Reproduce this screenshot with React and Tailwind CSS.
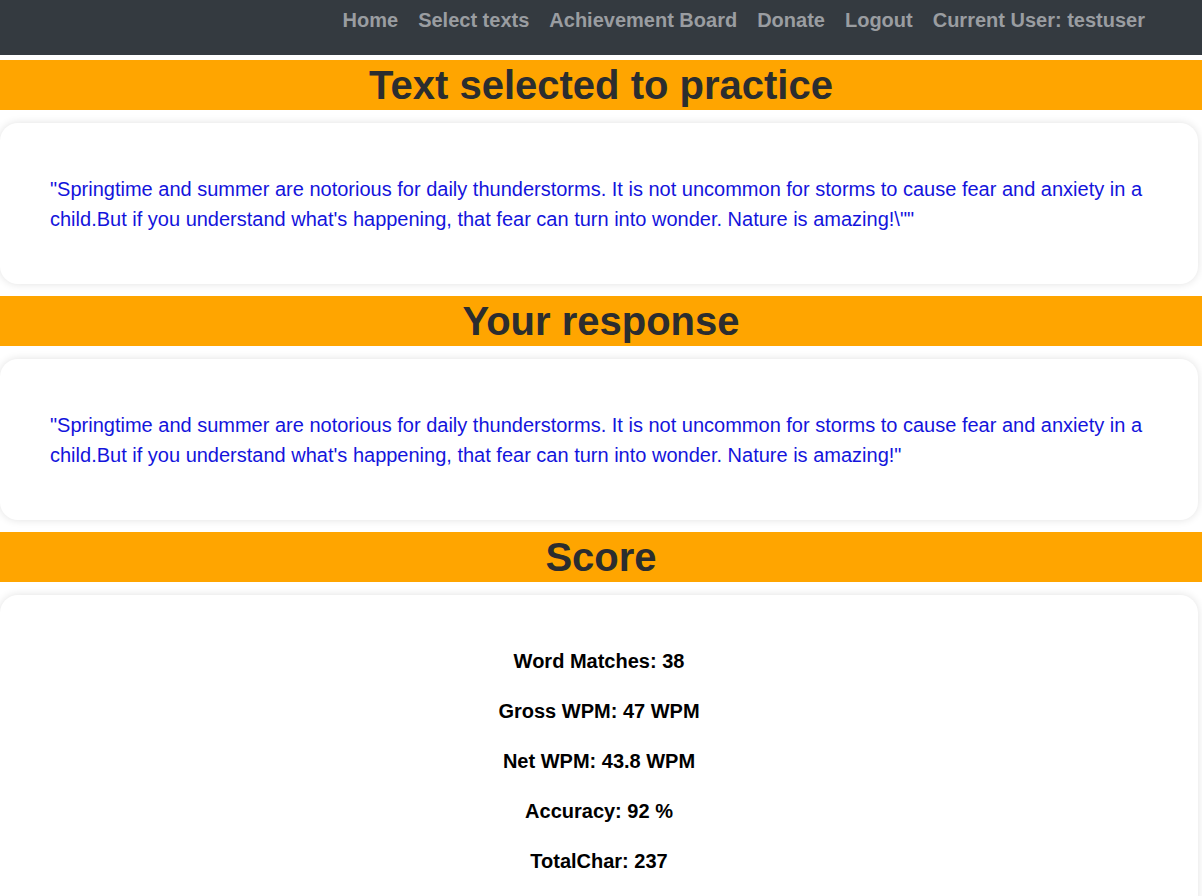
import React from "react";

const font = { fontFamily: '"Liberation Sans", Arial, sans-serif' };

function Bar({ children }) {
  return (
    <h1 className="bg-[#ffa500] text-[#2b2d2f] text-[40px] leading-[50px] font-bold text-center">
      {children}
    </h1>
  );
}

function Card({ children, center }) {
  return (
    <div
      className={
        "bg-white rounded-[18px] shadow-[0_0_8px_rgba(0,0,0,0.12)] mr-[4px] px-[50px] pt-[51px] pb-[50px] " +
        (center ? "text-center" : "")
      }
    >
      {children}
    </div>
  );
}

export default function App() {
  const nav = ["Home", "Select texts", "Achievement Board", "Donate", "Logout", "Current User: testuser"];
  const stats = [
    "Word Matches: 38",
    "Gross WPM: 47 WPM",
    "Net WPM: 43.8 WPM",
    "Accuracy: 92 %",
    "TotalChar: 237",
  ];
  return (
    <div style={font} className="bg-white min-h-[896px]">
      <nav className="bg-[#343a40] h-[55px] flex justify-end items-start pr-[57px]">
        <div className="flex gap-[20px] pt-[7px]">
          {nav.map((n) => (
            <span key={n} className="text-[20px] leading-[26px] font-bold text-[#9a9da1]">
              {n}
            </span>
          ))}
        </div>
      </nav>
      <div className="pt-[5px] flex flex-col gap-[12.5px]">
        <Bar>Text selected to practice</Bar>
        <Card>
          <p className="text-[20px] leading-[30px] text-[#1414dc]">
            "Springtime and summer are notorious for daily thunderstorms. It is not uncommon for storms to cause fear and anxiety in a child.But if you understand what's happening, that fear can turn into wonder. Nature is amazing!\""
          </p>
        </Card>
        <Bar>Your response</Bar>
        <Card>
          <p className="text-[20px] leading-[30px] text-[#1414dc]">
            "Springtime and summer are notorious for daily thunderstorms. It is not uncommon for storms to cause fear and anxiety in a child.But if you understand what's happening, that fear can turn into wonder. Nature is amazing!"
          </p>
        </Card>
        <Bar>Score</Bar>
        <Card center>
          <div className="flex flex-col gap-[20px]">
            {stats.map((s) => (
              <p key={s} className="text-[20px] leading-[30px] font-bold text-black">
                {s}
              </p>
            ))}
          </div>
        </Card>
      </div>
    </div>
  );
}
